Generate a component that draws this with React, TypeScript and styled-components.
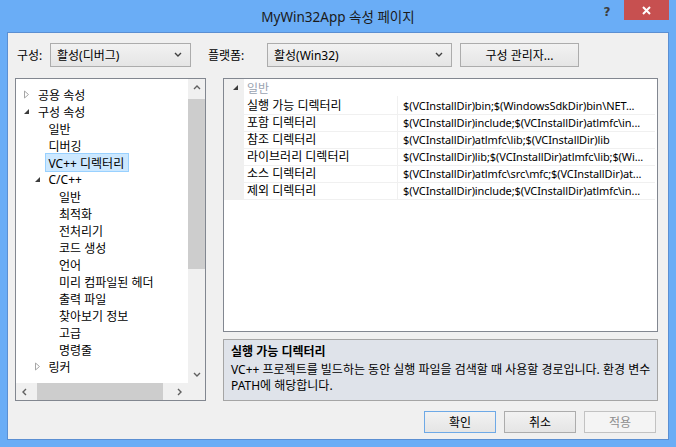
import styled, { createGlobalStyle } from 'styled-components'

const uiFont = `"Segoe UI", "Noto Sans", "Noto Sans CJK KR", sans-serif`

const GlobalStyle = createGlobalStyle`
    html, body {
        margin: 0;
        padding: 0;
    }
    body {
        font-family: ${uiFont};
        font-size: 12px;
        color: #000;
        background: #6aadf6;
    }
    * {
        box-sizing: border-box;
    }
`

type TreeNode = {
    label: string
    level: number
    expander?: 'open' | 'closed'
    selected?: boolean
}

const treeNodes: TreeNode[] = [
    { label: '공용 속성', level: 0, expander: 'closed' },
    { label: '구성 속성', level: 0, expander: 'open' },
    { label: '일반', level: 1 },
    { label: '디버깅', level: 1 },
    { label: 'VC++ 디렉터리', level: 1, selected: true },
    { label: 'C/C++', level: 1, expander: 'open' },
    { label: '일반', level: 2 },
    { label: '최적화', level: 2 },
    { label: '전처리기', level: 2 },
    { label: '코드 생성', level: 2 },
    { label: '언어', level: 2 },
    { label: '미리 컴파일된 헤더', level: 2 },
    { label: '출력 파일', level: 2 },
    { label: '찾아보기 정보', level: 2 },
    { label: '고급', level: 2 },
    { label: '명령줄', level: 2 },
    { label: '링커', level: 1, expander: 'closed' },
]

const properties = [
    { name: '실행 가능 디렉터리', value: '$(VCInstallDir)bin;$(WindowsSdkDir)bin\\NET...' },
    { name: '포함 디렉터리', value: '$(VCInstallDir)include;$(VCInstallDir)atlmfc\\in...' },
    { name: '참조 디렉터리', value: '$(VCInstallDir)atlmfc\\lib;$(VCInstallDir)lib' },
    { name: '라이브러리 디렉터리', value: '$(VCInstallDir)lib;$(VCInstallDir)atlmfc\\lib;$(Wi...' },
    { name: '소스 디렉터리', value: '$(VCInstallDir)atlmfc\\src\\mfc;$(VCInstallDir)at...' },
    { name: '제외 디렉터리', value: '$(VCInstallDir)include;$(VCInstallDir)atlmfc\\in...' },
]

// small glyphs -------------------------------------------------------------

const Chevron = ({ dir, color = '#606060' }: { dir: 'up' | 'down' | 'left' | 'right'; color?: string }) => {
    const paths = {
        up: 'M1 5 L4 2 L7 5',
        down: 'M1 2 L4 5 L7 2',
        left: 'M5 1 L2 4 L5 7',
        right: 'M2 1 L5 4 L2 7',
    }
    return (
        <svg width="8" height="8" viewBox="0 0 8 8">
            <path d={paths[dir]} fill="none" stroke={color} strokeWidth="1.4" />
        </svg>
    )
}

const Expander = ({ state }: { state: 'open' | 'closed' }) =>
    state === 'open' ? (
        <svg width="7" height="7" viewBox="0 0 7 7">
            <path d="M6 1 L6 6 L1 6 Z" fill="#3c3c3c" />
        </svg>
    ) : (
        <svg width="7" height="9" viewBox="0 0 7 9">
            <path d="M1.5 1 L5.5 4.5 L1.5 8 Z" fill="none" stroke="#a6a6a6" strokeWidth="1" />
        </svg>
    )

// page ---------------------------------------------------------------------

function App() {
    return (
        <>
            <GlobalStyle />
            <Window>
                <TitleBar>
                    <Title>MyWin32App 속성 페이지</Title>
                    <Controls>
                        <HelpButton>?</HelpButton>
                        <CloseButton>
                            <svg width="9" height="9" viewBox="0 0 9 9">
                                <path d="M1 1 L8 8 M8 1 L1 8" stroke="#fff" strokeWidth="2" />
                            </svg>
                        </CloseButton>
                    </Controls>
                </TitleBar>

                <Client>
                    <TopRow>
                        <FieldLabel width={33}>구성:</FieldLabel>
                        <Combo width={141}>
                            <span>활성(디버그)</span>
                            <Chevron dir="down" color="#404040" />
                        </Combo>
                        <FieldLabel width={59} gap={17}>플랫폼:</FieldLabel>
                        <Combo width={185}>
                            <span>활성(Win32)</span>
                            <Chevron dir="down" color="#404040" />
                        </Combo>
                        <PushButton width={119} gap={8}>구성 관리자...</PushButton>
                    </TopRow>

                    <Main>
                        <TreePanel>
                            <TreeList>
                                {treeNodes.map((node, i) => (
                                    <TreeRow key={i} level={node.level}>
                                        <ExpanderSlot>{node.expander && <Expander state={node.expander} />}</ExpanderSlot>
                                        <TreeLabel selected={node.selected}>{node.label}</TreeLabel>
                                    </TreeRow>
                                ))}
                            </TreeList>
                            <VScroll>
                                <ArrowCell><Chevron dir="up" /></ArrowCell>
                                <VTrack>
                                    <VThumb style={{ height: 170 }} />
                                </VTrack>
                                <ArrowCell><Chevron dir="down" /></ArrowCell>
                            </VScroll>
                            <HScroll>
                                <ArrowCell><Chevron dir="left" /></ArrowCell>
                                <HTrack>
                                    <HThumb style={{ width: 126 }} />
                                </HTrack>
                                <ArrowCell><Chevron dir="right" /></ArrowCell>
                            </HScroll>
                            <ScrollCorner />
                        </TreePanel>

                        <RightColumn>
                            <GridPanel>
                                <CategoryRow>
                                    <Gutter><Expander state="open" /></Gutter>
                                    <CategoryName>일반</CategoryName>
                                </CategoryRow>
                                {properties.map(p => (
                                    <PropRow key={p.name}>
                                        <Gutter />
                                        <PropName>{p.name}</PropName>
                                        <PropValue>{p.value}</PropValue>
                                    </PropRow>
                                ))}
                            </GridPanel>
                            <Description>
                                <DescTitle>실행 가능 디렉터리</DescTitle>
                                <DescLine>VC++ 프로젝트를 빌드하는 동안 실행 파일을 검색할 때 사용할 경로입니다. 환경 변수</DescLine>
                                <DescLine>PATH에 해당합니다.</DescLine>
                            </Description>
                        </RightColumn>
                    </Main>

                    <Footer>
                        <DialogButton kind="default">확인</DialogButton>
                        <DialogButton>취소</DialogButton>
                        <DialogButton kind="disabled">적용</DialogButton>
                    </Footer>
                </Client>
            </Window>
        </>
    )
}

const Window = styled.div`
    width: 676px;
    height: 447px;
    background: #6aadf6;
    display: flex;
    flex-direction: column;
    padding: 0 7px 7px;
`

const TitleBar = styled.div`
    height: 32px;
    flex: none;
    display: grid;
    grid-template-columns: 1fr auto 1fr;
    align-items: center;
`

const Title = styled.div`
    grid-column: 2;
    font-size: 13.5px;
    color: #1a1a1a;
    padding-bottom: 1px;
`

const Controls = styled.div`
    grid-column: 3;
    justify-self: end;
    align-self: start;
    display: flex;
    align-items: flex-start;
`

const HelpButton = styled.div`
    width: 26px;
    height: 20px;
    margin-right: 4px;
    display: flex;
    align-items: center;
    justify-content: center;
    padding-top: 3px;
    font-family: "DejaVu Sans", sans-serif;
    font-weight: bold;
    font-size: 12px;
    color: #3d3d3d;
`

const CloseButton = styled.div`
    width: 45px;
    height: 20px;
    background: #c75050;
    display: flex;
    align-items: center;
    justify-content: center;
`

const Client = styled.div`
    flex: 1;
    background: #f0f0f0;
    border: 1px solid #5b8fd2;
    display: flex;
    flex-direction: column;
    padding: 10px 10px 6px 7px;
`

const TopRow = styled.div`
    height: 24px;
    display: flex;
    align-items: center;
    padding-left: 2px;
`

const FieldLabel = styled.div<{ width: number; gap?: number }>`
    width: ${p => p.width}px;
    margin-left: ${p => p.gap || 0}px;
    flex: none;
`

const Combo = styled.div<{ width: number }>`
    width: ${p => p.width}px;
    height: 24px;
    flex: none;
    display: flex;
    align-items: center;
    justify-content: space-between;
    padding: 0 8px 0 6px;
    border: 1px solid #acacac;
    background: linear-gradient(#f2f2f2, #e5e5e5);
`

const PushButton = styled.div<{ width: number; gap?: number }>`
    width: ${p => p.width}px;
    height: 24px;
    margin-left: ${p => p.gap || 0}px;
    flex: none;
    display: flex;
    align-items: center;
    justify-content: center;
    border: 1px solid #acacac;
    background: linear-gradient(#f2f2f2, #e5e5e5);
`

const Main = styled.div`
    height: 323px;
    margin-top: 11px;
    display: flex;
    gap: 17px;
`

const TreePanel = styled.div`
    width: 191px;
    flex: none;
    border: 1px solid #828790;
    background: #fff;
    display: grid;
    grid-template-columns: 1fr 17px;
    grid-template-rows: 1fr 17px;
`

const TreeList = styled.div`
    padding-top: 7px;
    overflow: hidden;
`

const TreeRow = styled.div<{ level: number }>`
    height: 17px;
    display: flex;
    align-items: center;
    padding-left: ${p => 7 + p.level * 10.5}px;
    white-space: nowrap;
`

const ExpanderSlot = styled.div`
    width: 11px;
    flex: none;
    display: flex;
    align-items: center;
`

const TreeLabel = styled.div<{ selected?: boolean }>`
    height: 19px;
    display: flex;
    align-items: center;
    padding: 0 4px 0 3px;
    border: 1px solid ${p => (p.selected ? '#99d1ff' : 'transparent')};
    background: ${p => (p.selected ? '#cce8ff' : 'transparent')};
`

const VScroll = styled.div`
    background: #f0f0f0;
    display: flex;
    flex-direction: column;
`

const HScroll = styled.div`
    background: #f0f0f0;
    display: flex;
`

const ArrowCell = styled.div`
    width: 17px;
    height: 17px;
    flex: none;
    display: flex;
    align-items: center;
    justify-content: center;
`

const VTrack = styled.div`
    flex: 1;
    padding: 3px 0 0;
    display: flex;
    flex-direction: column;
    align-items: center;
`

const VThumb = styled.div`
    width: 17px;
    background: #cdcdcd;
`

const HTrack = styled.div`
    flex: 1;
    padding-left: 4px;
    display: flex;
    align-items: center;
`

const HThumb = styled.div`
    height: 17px;
    background: #cdcdcd;
`

const ScrollCorner = styled.div`
    background: #f0f0f0;
`

const RightColumn = styled.div`
    flex: 1;
    display: flex;
    flex-direction: column;
    gap: 7px;
`

const GridPanel = styled.div`
    flex: 1;
    border: 1px solid #828790;
    background: #fff;
    padding-right: 2px;
    overflow: hidden;
`

const CategoryRow = styled.div`
    height: 17px;
    display: flex;
    align-items: center;
`

const Gutter = styled.div`
    width: 20px;
    height: 100%;
    flex: none;
    background: #f0f0f0;
    display: flex;
    align-items: center;
    justify-content: center;
    padding-left: 2px;
`

const CategoryName = styled.div`
    padding-left: 3px;
    color: #9aa3b1;
`

const PropRow = styled.div`
    height: 17px;
    display: grid;
    grid-template-columns: 20px 153px 1fr;
`

const PropName = styled.div`
    padding-left: 3px;
    display: flex;
    align-items: center;
    border-bottom: 1px solid #f0f0f0;
    white-space: nowrap;
`

const PropValue = styled.div`
    padding-left: 5px;
    display: flex;
    align-items: center;
    border-left: 1px solid #f0f0f0;
    border-bottom: 1px solid #f0f0f0;
    white-space: nowrap;
    overflow: hidden;
    font-size: 11px;
    letter-spacing: -0.1px;
`

const Description = styled.div`
    height: 62px;
    flex: none;
    border: 1px solid #a5a5a5;
    background: #dfe3ea;
    padding: 3px 7px 0;
`

const DescTitle = styled.div`
    font-weight: bold;
    line-height: 17px;
    margin-bottom: 2px;
`

const DescLine = styled.div`
    line-height: 16px;
    white-space: nowrap;
`

const Footer = styled.div`
    margin-top: 10px;
    height: 22px;
    display: flex;
    justify-content: flex-end;
    gap: 8px;
    padding-right: 2px;
`

const DialogButton = styled.div<{ kind?: 'default' | 'disabled' }>`
    width: 72px;
    height: 22px;
    display: flex;
    align-items: center;
    justify-content: center;
    border: 1px solid ${p => (p.kind === 'default' ? '#6ea9e6' : p.kind === 'disabled' ? '#c2c2c2' : '#acacac')};
    background: ${p => (p.kind === 'disabled' ? '#f4f4f4' : 'linear-gradient(#f2f2f2, #e5e5e5)')};
    color: ${p => (p.kind === 'disabled' ? '#8d8d8d' : '#000')};
`

export default App
